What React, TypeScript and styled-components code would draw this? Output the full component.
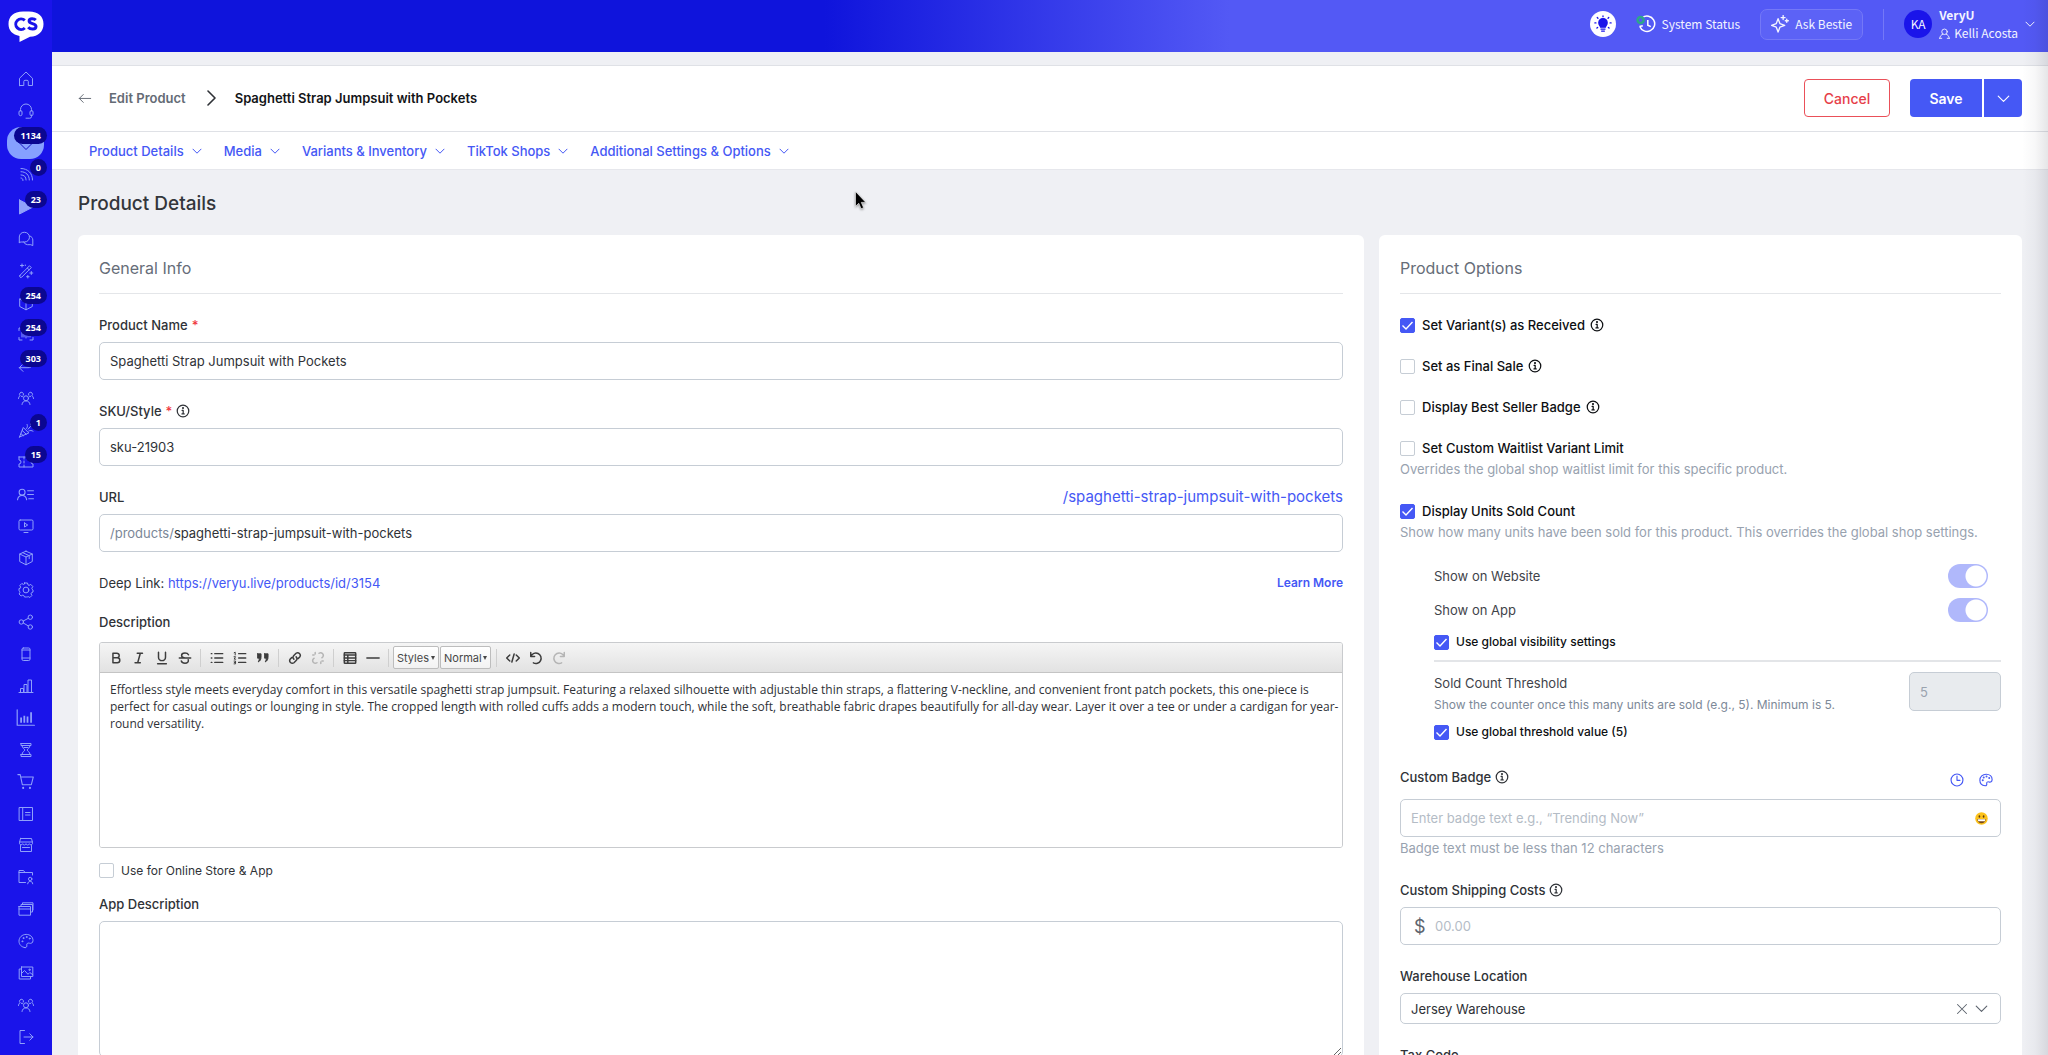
import React, { useId } from "react";
import styled, { createGlobalStyle, css } from "styled-components";

const ink = "#2f3237";
const accent = "#4558f5";
const line = "#c6cdd5";
const muted = "#98a2af";

const GlobalStyle = createGlobalStyle`
  * { box-sizing: border-box; }
  body { margin: 0; background: #eff0f4; }
  body, button, input, select, textarea { font-family: Inter, "Liberation Sans", sans-serif; }
  button { border: 0; padding: 0; background: none; cursor: pointer; }
  a { text-decoration: none; }
  svg { display: block; flex: none; }
`;

/* ---------- icons ---------- */

const Glyph = styled.svg.attrs<{ $w?: number }>({ fill: "none", stroke: "currentColor", strokeLinecap: "round", strokeLinejoin: "round" })<{ $w?: number }>`
  stroke-width: ${(p) => p.$w ?? 1};
`;

function Icon({ size = 16, w = 1, children }: { size?: number; w?: number; children: React.ReactNode }) {
  return (
    <Glyph viewBox="0 0 16 16" width={size} height={size} $w={w} aria-hidden="true">
      {children}
    </Glyph>
  );
}

const ChevronDown = ({ size = 10, w = 2 }: { size?: number; w?: number }) => (
  <Icon size={size} w={w}><path d="M1.5 5 8 11.5 14.5 5" /></Icon>
);

const Info = () => (
  <Icon size={14} w={1.4}>
    <circle cx="8" cy="8" r="6.6" />
    <path d="M6.9 7.2H8.2V11.3M6.8 11.4H9.4" />
    <circle cx="8" cy="4.7" r=".5" fill="currentColor" />
  </Icon>
);

const Clock = ({ size = 14 }: { size?: number }) => (
  <Icon size={size} w={1.3}><circle cx="8" cy="8" r="6.8" /><path d="M8 3.6V8.4H11.4" /></Icon>
);

const paletteShape = (
  <>
    <path d="M7 14.6C3.4 14.2 1 11.500 1 8.200 1 4.300 4.200 1.400 8.200 1.400s6.800 2.600 6.800 6c0 2.600-1.900 3.400-3.600 2.800-1.600-.5-3 .4-2.600 1.900.4 1.400-.3 2.600-1.800 2.500Z" />
    <circle cx="4.300" cy="8.300" r=".5" /><circle cx="5.400" cy="5.100" r=".5" /><circle cx="8.600" cy="4" r=".5" /><circle cx="11.700" cy="5.600" r=".5" />
  </>
);

const people = (
  <>
    <circle cx="8" cy="8.300" r="2.500" />
    <path d="M4 14.500c.2-2.200 1.800-3.600 4-3.600s3.800 1.400 4 3.600" />
    <path d="M5.300 5.200A2 2 0 1 0 2.200 5.800C1.100 6.300.6 7.300.5 8.500M3.400 6.300c.6 0 1 .1 1.500.5" />
    <path d="M10.700 5.200A2 2 0 1 1 13.800 5.800c1.100.5 1.600 1.500 1.700 2.700M12.600 6.300c-.6 0-1 .1-1.500.5" />
  </>
);

const cube = <path d="M8 1.200 14.300 4v7.500L8 14.800 1.700 11.500V4L8 1.200ZM1.700 4 8 7l6.300-3M8 7v7.800" />;

interface NavEntry { name: string; art: React.ReactNode; badge?: string; active?: boolean; size?: number }

const sideNav: NavEntry[] = [
  { name: "Home", art: <path d="M1.500 14.500V7.300L8 1l6.500 6.300v7.200h-4.200v-4a1.200 1.200 0 0 0-1.200-1.200H7a1.200 1.200 0 0 0-1.200 1.200v4H1.500Z" /> },
  { name: "Support", art: <><path d="M2.500 8V6.500a5.500 5.500 0 0 1 11 0V8M13.500 12v1.500a1.700 1.700 0 0 1-1.700 1.700H8" /><rect x="1" y="7.500" width="3" height="5.200" rx="1.500" /><rect x="12" y="7.500" width="3" height="5.200" rx="1.500" /></> },
  { name: "Products", badge: "1134", active: true, art: <path d="M1 7.500 4 4h8l3 3.500-7 7L1 7.500Z" /> },
  { name: "Live", badge: "0", art: <><path d="M3 1.500C9.800 1.500 14.500 6.200 14.500 13M3 4.700c5 0 8.300 3.300 8.300 8.300M3 7.900c3.200 0 5.100 1.900 5.100 5.100M3 11a2 2 0 0 1 2 2.500" /></> },
  { name: "Replays", badge: "23", art: <path d="M1.500 1v14L15 8 1.500 1Z" fill="currentColor" /> },
  { name: "Messages", art: <><path d="M1.300 11.300V6A4.700 4.700 0 0 1 6 1.300h.7A4.800 4.800 0 0 1 6.500 11H3.200l-1.900.3Z" /><path d="M11.800 5c1.900.5 3 2 3 4v5.600l-2-.9H9.500A4 4 0 0 1 5.800 11" /></> },
  { name: "Magic", art: <><path d="m2 12.300 9.500-9.500 1.800 1.800-9.500 9.500a1.270 1.270 0 0 1-1.800-1.800ZM9.300 5l1.800 1.800" /><path d="M4 1v3M2.500 2.500h3M13.300 8.500v3M11.800 10h3M9.800 12.500v2.500M8.600 13.700h2.500M7.300 2v.6" /></> },
  { name: "Orders", badge: "254", art: cube },
  { name: "Scan", badge: "254", art: <path d="M1 4.500V2h3M12 2h3v2.500M15 11.500V14h-3M4 14H1v-2.500M4 6v5M6 6v5M8 5v7M10 6v5M12 6v5" /> },
  { name: "Returns", badge: "303", art: <path d="M5 6 1.300 9.700 5 13.400M1.300 9.700H10A4 4 0 0 0 14.500 6V3" /> },
  { name: "Customers", art: people },
  { name: "Promotions", badge: "1", art: <><path d="M1.500 15 5.300 5.500l5.500 5.500L1.500 15ZM4.200 8.500l4 3.700M2.900 11.600l2.500 2.100" /><path d="M8.500 6.500c1-1 1.200-2.500.6-4M10 7.300l3-3.500M10.700 9c1.500-.8 3-.6 4.300.2M12.500 1.500v1M14.500 5.500h.6" /></> },
  { name: "Coupons", badge: "15", art: <path d="M1 3h14v3a2 2 0 0 0 0 4v3H1v-3a2 2 0 0 0 0-4V3ZM6 3v2M6 7v2M6 11v2" /> },
  { name: "Accounts", size: 17, art: <><circle cx="4.800" cy="5.800" r="2.800" /><path d="M.5 13c.3-2.500 1.900-4 4.300-4s4 1.500 4.300 4M10 4.500h5.500M10 8h5.500M11 12h4.500" /></> },
  { name: "Videos", art: <><rect x="1" y="2" width="14" height="10" rx="1.200" /><path d="M6.500 5v4L9.700 7 6.500 5ZM6 14.500h4" /></> },
  { name: "Inventory", art: <>{cube}<path d="m4.800 2.700 6.400 3v3" /></> },
  { name: "Settings", art: <><circle cx="8" cy="8" r="2.900" /><path d="M6.500 1h3l.5 1.900 1 .5 1.800-1 2 2.100-1 1.800.4 1 .8.700v2l-1.600.800-.4 1 .9 1.700-2 2-1.700-.9-1 .4L8.500 15h-2l-.7-1.500-1-.4-1.700.9-2-2 .9-1.700-.4-1L1 8.800V6.500l1.300-.3.4-1-.9-1.700 2-2 1.700.9 1-.4V1Z" /></> },
  { name: "Share", art: <><circle cx="3.300" cy="8" r="2.200" /><circle cx="12.300" cy="3.200" r="2.200" /><circle cx="12.300" cy="13" r="2.200" /><path d="m5.300 7 5-2.700M5.300 9l5 2.900" /></> },
  { name: "Mobile App", art: <><rect x="4" y="2" width="8" height="12.500" rx="1.300" /><path d="M4 4h8M4 12h8" /></> },
  { name: "Reports", art: <path d="M1 14.500h14M2.500 14.500v-4h3v4M6 14.500V6.500h3v8M10 14.500V2h3.500v12.500" /> },
  { name: "Analytics", size: 19, art: <><path d="M1 1.500v13h14.500" /><path d="M4.300 12.500V8M7 12.500v-6M9.700 12.500V7.200M12.700 12.500V3.500" strokeWidth="1.500" strokeLinecap="butt" /></> },
  { name: "Waitlist", art: <path d="M3 1.500h10v2H3v-2ZM3 12.500h10v2H3v-2ZM4 3.500c0 3 2.800 3.200 2.800 4.500S4 9.500 4 12.500M12 3.500c0 3-2.800 3.200-2.800 4.500s2.800 1.500 2.800 4.500M6 5.500h4" /> },
  { name: "Carts", size: 17, art: <><path d="M.8 1.500H3L5 11h8.500l1.800-7.200H3.600" /><circle cx="5.800" cy="14" r=".5" /><circle cx="12.200" cy="14" r=".5" /></> },
  { name: "Catalog", art: <><rect x="1.500" y="1.500" width="13" height="13" /><path d="M4.700 1.500v13M7.500 6.500H12M7.500 9H12" /></> },
  { name: "Storefront", art: <path d="M2.500 1.500h11l1 4v1.200a1.700 1.700 0 0 1-3.200 0 1.700 1.700 0 0 1-3.300 0 1.700 1.700 0 0 1-3.300 0 1.700 1.700 0 0 1-3.200 0V5.500l1-4ZM1.500 5h13M2.500 8.500v6h11v-6M4.500 10.500h7" /> },
  { name: "Team Files", art: <><path d="M7.500 13.500H1v-12h4.500l1.500 2h7.500V6M1 3.500h6" /><circle cx="12.200" cy="10" r="1.700" /><path d="M9.700 14.800c.2-1.500 1-2.500 2.500-2.500s2.300 1 2.500 2.500" /></> },
  { name: "Pages", art: <path d="M1 5.500h11.500v8.700H1V5.500ZM1 8h11.500M3 5.500v-2h11.500V11h-2M4.500 3.500V1.800H15V9" /> },
  { name: "Theme", art: paletteShape },
  { name: "Media Library", art: <><path d="M3.500 2h11.300v9.500H3.500V2ZM3.500 4H1.200v10h11.300v-2.500M3.500 8.500l3-3 3.500 3.800 1.800-1.800 3 2.300" /><circle cx="11.500" cy="4.800" r=".7" /></> },
  { name: "Community", art: people },
  { name: "Log Out", art: <path d="M6.500 1.500H2v13h4.500M6 8h9M11.800 4.800 15 8l-3.200 3.200" /> },
];

/* ---------- shell ---------- */

const Shell = styled.div`
  display: grid;
  grid-template-columns: 52px minmax(0, 1fr);
  height: 100vh;
`;

const Sidebar = styled.aside`
  display: flex;
  flex-direction: column;
  align-items: center;
  padding: 10px 0 2px;
  background: #1a14ea;
  color: #8fa0fb;
  min-height: 0;
`;

const Logo = styled.a`
  height: 53px;
`;

const SideList = styled.nav`
  flex: 1;
  display: flex;
  flex-direction: column;
  width: 100%;
  padding: 0 7px;
`;

const SideLink = styled.a<{ $active?: boolean }>`
  flex: 1;
  position: relative;
  display: flex;
  align-items: center;
  justify-content: center;
  width: 37px;
  color: ${(p) => (p.$active ? "#1411c4" : "inherit")};
  border-radius: 14px;
  background: ${(p) => (p.$active ? "#86a0ff" : "none")};
  background-clip: content-box;
  min-height: 0;
`;

const Badge = styled.span`
  position: absolute;
  top: 0;
  right: -3px;
  min-width: 16px;
  padding: 0 6px;
  border-radius: 9px;
  background: #0b0791;
  color: #fff;
  font: 700 9px/17px "Noto Sans", sans-serif;
  text-align: center;
`;

const Main = styled.div`
  position: relative;
  display: flex;
  flex-direction: column;
  min-height: 0;
  &::after {
    content: "";
    position: absolute;
    inset: 0 0 0 auto;
    width: 26px;
    background: linear-gradient(to right, rgba(20, 20, 40, 0), rgba(20, 20, 40, 0.03) 50%, rgba(20, 20, 40, 0.11));
    pointer-events: none;
  }
`;

const TopBar = styled.header`
  flex: none;
  display: flex;
  align-items: center;
  justify-content: flex-end;
  gap: 20px;
  height: 52px;
  padding: 0 11px 4px 0;
  background: linear-gradient(to right, #0f14dc 38.7%, #5359f5 59%);
  color: #f3f4ff;
  font: 400 12px/18px "Noto Sans CJK SC", "Noto Sans", sans-serif;
`;

const BulbButton = styled.button`
  display: grid;
  place-items: center;
  width: 26px;
  height: 26px;
  border-radius: 50%;
  background: #fff;
  color: #1a14ea;
`;

const StatusLink = styled.a`
  display: flex;
  align-items: center;
  gap: 6px;
  color: inherit;
`;

const BestieButton = styled.button`
  display: flex;
  align-items: center;
  gap: 6px;
  height: 31px;
  padding: 0 10px;
  border: 1px solid #7478f7;
  border-radius: 7px;
  background: #5c62f6;
  color: inherit;
  font: inherit;
`;

const BarRule = styled.span`
  width: 1px;
  height: 31px;
  background: #7478f7;
`;

const Account = styled.button`
  display: grid;
  grid-template-columns: 28px auto 12px;
  align-items: center;
  gap: 7px;
  color: inherit;
  font: inherit;
  text-align: left;
`;

const Avatar = styled.span`
  display: grid;
  place-items: center;
  width: 28px;
  height: 28px;
  border-radius: 50%;
  background: #1a14ea;
`;

const AccountText = styled.span`
  display: flex;
  flex-direction: column;
`;

const AccountUser = styled.span`
  display: flex;
  align-items: center;
  gap: 4px;
`;

/* ---------- page heading ---------- */

const PageHead = styled.div`
  flex: none;
  display: flex;
  align-items: center;
  height: 67px;
  margin-top: 13px;
  padding: 0 26px 1px;
  border: solid #dfe1e6;
  border-width: 1px 0;
  background: #fff;
`;

const Crumbs = styled.nav`
  flex: 1;
  display: flex;
  align-items: center;
  color: ${ink};
  font-size: 13px;
  font-weight: 600;
`;

const BackLink = styled.a`
  display: flex;
  align-items: center;
  gap: 17px;
  margin-right: 17px;
  color: #646b75;
`;

const CrumbTitle = styled.span`
  margin-left: 16px;
  color: #121417;
`;

const CancelButton = styled.button`
  width: 86px;
  height: 38px;
  margin-right: 20px;
  border: 1px solid #ea5059;
  border-radius: 4px;
  color: #e63e49;
  font-size: 14px;
  font-weight: 500;
`;

const SaveButton = styled.button<{ $menu?: boolean }>`
  display: grid;
  place-items: center;
  width: ${(p) => (p.$menu ? 38 : 72)}px;
  height: 38px;
  margin-left: ${(p) => (p.$menu ? 2 : 0)}px;
  border-radius: ${(p) => (p.$menu ? "0 4px 4px 0" : "4px 0 0 4px")};
  background: ${accent};
  color: #fff;
  font-size: 14px;
  font-weight: 600;
`;

const Tabs = styled.nav`
  flex: none;
  display: flex;
  align-items: center;
  gap: 22px;
  height: 38px;
  padding: 0 37px;
  border-bottom: 1px solid #e6e7ec;
  background: #fff;
`;

const Tab = styled.button`
  display: flex;
  align-items: center;
  gap: 8px;
  color: ${accent};
  font-size: 13px;
  font-weight: 500;
`;

const Content = styled.main`
  flex: 1;
  min-height: 0;
  padding: 0 26px;
  overflow: hidden auto;
  scrollbar-width: none;
`;

const SectionTitle = styled.h1`
  margin: 21px 0 18px;
  color: #33363b;
  font-size: 19px;
  font-weight: 500;
  line-height: 26px;
`;

const Columns = styled.div`
  display: grid;
  grid-template-columns: minmax(0, 2fr) minmax(0, 1fr);
  align-items: start;
  gap: 15px;
`;

const Card = styled.section`
  padding: 0 21px 32px;
  border-radius: 6px;
  background: #fff;
`;

const CardTitle = styled.h2`
  margin: 0 0 21px;
  padding: 21px 0 13px;
  border-bottom: 1px solid #e4e6e9;
  color: #666d78;
  font-size: 16px;
  font-weight: 400;
  line-height: 24px;
`;

/* ---------- form parts ---------- */

const Field = styled.div`
  margin-bottom: 21px;
`;

const FieldHead = styled.div<{ $gap?: number }>`
  display: flex;
  align-items: center;
  justify-content: space-between;
  margin-bottom: ${(p) => p.$gap ?? 7}px;
`;

const Label = styled.label`
  display: flex;
  align-items: center;
  gap: 4px;
  color: ${ink};
  font-size: 13px;
  font-weight: 500;
  line-height: 20px;
`;

const Required = styled.span`
  color: #f0383e;
`;

const boxed = css`
  border: 1px solid ${line};
  border-radius: 5px;
  background: #fff;
  color: ${ink};
  font-size: 13px;
`;

const TextInput = styled.input`
  ${boxed}
  display: block;
  width: 100%;
  height: 38px;
  padding: 0 10px;
`;

const InputBox = styled.div<{ $h?: number }>`
  ${boxed}
  display: flex;
  align-items: center;
  height: ${(p) => p.$h ?? 38}px;
  padding: 0 12px 0 10px;
`;

const bare = css`
  flex: 1;
  min-width: 0;
  padding: 0;
  border: 0;
  outline: 0;
  background: none;
  color: ${ink};
  font-size: 13px;
  &::placeholder { color: #b4bcc6; opacity: 1; }
`;

const BareInput = styled.input`${bare}`;
const BareSelect = styled.select`
  ${bare}
  appearance: none;
`;

const Prefix = styled.span`
  color: #7b8797;
  font-size: 13px;
`;

const Dollar = styled.span`
  width: 24px;
  padding-left: 3px;
  color: #5d646e;
  font-size: 18px;
`;

const SelectMarks = styled.span`
  display: flex;
  align-items: center;
  gap: 7px;
  color: #5d646e;
`;

const BlueLink = styled.a<{ $size?: number; $strong?: boolean }>`
  color: ${accent};
  font-size: ${(p) => p.$size ?? 13}px;
  font-weight: ${(p) => (p.$strong ? 600 : 400)};
  line-height: 20px;
`;

const DeepLink = styled.div`
  display: flex;
  justify-content: space-between;
  margin: 0 0 19px;
  color: ${ink};
  font-size: 13px;
  line-height: 20px;
`;

const Editor = styled.div`
  border: 1px solid #c9cbce;
  border-radius: 3px;
  overflow: hidden;
`;

const Toolbar = styled.div`
  display: flex;
  align-items: center;
  height: 30px;
  padding: 0 4px;
  border-bottom: 1px solid #c4c4c4;
  background: linear-gradient(#f5f5f5, #e2e2e2);
`;

const ToolButton = styled.button`
  display: grid;
  place-items: center;
  width: 23px;
  height: 24px;
  color: #3d3d3d;
  &:disabled { color: #b5b5b5; }
`;

const ToolRule = styled.span`
  width: 1px;
  height: 18px;
  margin: 0 4px;
  background: #cfcfcf;
`;

const ToolSelect = styled.span<{ $w: number }>`
  display: flex;
  align-items: center;
  width: ${(p) => p.$w}px;
  height: 23px;
  margin-right: 1px;
  padding: 0 3px;
  border: 1px solid #bdbdbd;
  border-radius: 2px;
  background: linear-gradient(#fff, #f2f2f2);
  color: #474747;
  select {
    ${bare}
    appearance: none;
    color: inherit;
    font-size: 11px;
  }
`;

const EditorText = styled.textarea`
  display: block;
  width: 100%;
  height: 174px;
  padding: 8px 0 8px 10px;
  border: 0;
  outline: 0;
  resize: none;
  color: ${ink};
  font-family: "Open Sans", sans-serif;
  font-size: 12px;
  line-height: 17px;
`;

const PlainArea = styled.textarea`
  ${boxed}
  display: block;
  width: 100%;
  height: 136px;
  padding: 10px;
  resize: vertical;
`;

const CheckRow = styled.div<{ $gap?: number; $small?: boolean }>`
  display: flex;
  align-items: center;
  gap: 7px;
  margin-bottom: ${(p) => p.$gap ?? 21}px;
  color: #0d0f12;
  font-size: ${(p) => (p.$small ? 12 : 13)}px;
  font-weight: 500;
  line-height: 20px;
  svg { margin-left: -2px; }
`;

const Tick = styled.input.attrs({ type: "checkbox" })`
  appearance: none;
  flex: none;
  width: 15px;
  height: 15px;
  margin: 0;
  border: 1px solid ${line};
  border-radius: 2px;
  background: #fff;
  &:checked {
    border-color: ${accent};
    background: ${accent} url("data:image/svg+xml,%3Csvg xmlns='http://www.w3.org/2000/svg' viewBox='0 0 13 13' fill='none' stroke='white' stroke-width='1.400'%3E%3Cpath d='M1.500 6.500 5 10 11.500 3'/%3E%3C/svg%3E");
  }
`;

const StoreCheck = styled.div`
  display: flex;
  align-items: center;
  gap: 7px;
  margin: 15px 0 16px;
  color: ${ink};
  font-size: 12px;
  line-height: 15px;
`;

const Hint = styled.p<{ $size?: number; $gap?: number; $dark?: boolean }>`
  margin: 1px 0 ${(p) => p.$gap ?? 22}px;
  color: ${(p) => (p.$dark ? "#7d8998" : muted)};
  font-size: ${(p) => p.$size ?? 13}px;
  line-height: 20px;
`;

const Nested = styled.div`
  padding-left: 34px;
`;

const SwitchRow = styled.div`
  display: flex;
  align-items: center;
  justify-content: space-between;
  height: 24px;
  margin-bottom: 10px;
  padding-right: 13px;
  color: #3f434a;
  font-size: 13px;
`;

const Switch = styled.input.attrs({ type: "checkbox", role: "switch" })`
  appearance: none;
  width: 40px;
  height: 24px;
  margin: 0;
  border-radius: 12px;
  background: radial-gradient(circle at 28px 12px, #fff 10px, #b0b8fb 11px);
`;

const Divider = styled.hr`
  height: 2px;
  margin: 8px 0 10px;
  border: 0;
  background: #e3e5e8;
`;

const Threshold = styled.div`
  display: flex;
  align-items: flex-start;
  justify-content: space-between;
  height: 50px;
  label {
    color: #3f434a;
    font-size: 13px;
    line-height: 22px;
  }
`;

const ThresholdInput = styled.input`
  ${boxed}
  width: 92px;
  height: 39px;
  padding: 0 10px;
  background: #e8ebee;
  color: #9aa3ae;
`;

const IconActions = styled.div`
  display: flex;
  gap: 15px;
  padding: 5px 8px 0 0;
  color: ${accent};
`;

const IconButton = styled.button`
  color: inherit;
`;

const Pointer = styled.svg`
  position: fixed;
  left: 855px;
  top: 191px;
  filter: drop-shadow(0 1px 1px rgba(0, 0, 0, 0.4));
  pointer-events: none;
`;

/* ---------- pieces ---------- */

function Check({ label, info, on, gap, small }: { label: string; info?: boolean; on?: boolean; gap?: number; small?: boolean }) {
  const id = useId();
  return (
    <CheckRow $gap={gap} $small={small}>
      <Tick id={id} defaultChecked={on} />
      <label htmlFor={id}>{label}</label>
      {info && <Info />}
    </CheckRow>
  );
}

function Toggle({ label }: { label: string }) {
  const id = useId();
  return (
    <SwitchRow>
      <label htmlFor={id}>{label}</label>
      <Switch id={id} defaultChecked />
    </SwitchRow>
  );
}

const Tool = ({ name, off, children }: { name: string; off?: boolean; children: React.ReactNode }) => (
  <ToolButton type="button" aria-label={name} disabled={off}>
    <Icon size={14} w={1.7}>{children}</Icon>
  </ToolButton>
);

function EditorToolbar() {
  return (
    <Toolbar role="toolbar" aria-label="Formatting">
      <Tool name="Bold"><path d="M4.500 2.500H9a2.600 2.600 0 0 1 0 5.300H4.500V2.500ZM4.500 7.800h5a2.800 2.800 0 0 1 0 5.700h-5V7.800Z" /></Tool>
      <Tool name="Italic"><path d="M6 2.500h6M3.500 13.500h6M9.500 2.500l-3 11" /></Tool>
      <Tool name="Underline"><path d="M4 1.500V7a4 4 0 0 0 8 0V1.500M3 14.500h10" /></Tool>
      <Tool name="Strikethrough"><path d="M12 4.300C11.300 2.900 9.900 2.200 8 2.200c-2.300 0-3.900 1.100-3.900 2.800 0 1.500 1.300 2.300 3 2.800M1.500 8h13M11.700 10c.8 2.300-1 3.900-3.700 3.900-2.200 0-3.700-.9-4.200-2.500" /></Tool>
      <ToolRule />
      <Tool name="Bulleted list"><path d="M5.500 3h9M5.500 8h9M5.500 13h9M1.500 3h.6M1.500 8h.6M1.500 13h.6" /></Tool>
      <Tool name="Numbered list"><path d="M6.500 3h8M6.500 8h8M6.500 13h8" /><path d="M1.300 2 2.500 1.300V4.500M1.200 6.500h1.700L1.300 9.300h1.800M1.200 11.500h1.700v3.200H1.200M1.500 13.100h1.300" strokeWidth="1.100" /></Tool>
      <Tool name="Quote"><path d="M1.800 3.200h4v4C5.800 9.800 4.500 11.600 2.500 12.500c1-1.500 1.300-2.900 1.200-4.300H1.800v-5ZM9.800 3.200h4v4c0 2.600-1.300 4.400-3.300 5.300 1-1.500 1.300-2.900 1.200-4.300H9.800v-5Z" fill="currentColor" strokeWidth="1" /></Tool>
      <ToolRule />
      <Tool name="Link"><path d="M6.700 9.300a3 3 0 0 1 0-4.200l2.500-2.500a3 3 0 0 1 4.200 4.200L11.800 8.400M9.300 6.700a3 3 0 0 1 0 4.200l-2.500 2.500a3 3 0 0 1-4.200-4.200L4.200 7.600" /></Tool>
      <Tool name="Unlink" off><path d="M9.200 2.600a3 3 0 0 1 4.200 4.200L12.500 7.700M6.800 13.400a3 3 0 0 1-4.200-4.200l.9-.9M2 4.500h1.500M4.800 1.800v1.500M11.200 12.700v1.500M12.500 11.500H14" /></Tool>
      <ToolRule />
      <Tool name="Table"><rect x="1.500" y="2" width="13" height="12" rx=".6" /><path d="M1.500 4.500h13M1.500 8h13M1.500 11h13M5.500 5v9" /></Tool>
      <Tool name="Horizontal line"><path d="M1 8h14" /></Tool>
      <ToolRule />
      <ToolSelect $w={46}>
        <select aria-label="Styles"><option>Styles</option></select>
        <svg width="4" height="4" viewBox="0 0 4 4" fill="currentColor" aria-hidden="true"><path d="M0 0h4L2 4Z" /></svg>
      </ToolSelect>
      <ToolSelect $w={51}>
        <select aria-label="Paragraph format"><option>Normal</option></select>
        <svg width="4" height="4" viewBox="0 0 4 4" fill="currentColor" aria-hidden="true"><path d="M0 0h4L2 4Z" /></svg>
      </ToolSelect>
      <ToolRule />
      <Tool name="Source"><path d="M4.300 4.500.8 8l3.500 3.500M11.700 4.500 15.200 8l-3.500 3.500M9.300 3.500l-2.600 9" /></Tool>
      <Tool name="Undo"><path d="M2 1.800v4.400h4.400M2.300 6A6 6 0 1 1 5 13.600" /></Tool>
      <Tool name="Redo" off><path d="M14 1.800v4.400H9.600M13.700 6A6 6 0 1 0 11 13.600" /></Tool>
    </Toolbar>
  );
}

const description =
  "Effortless style meets everyday comfort in this versatile spaghetti strap jumpsuit. Featuring a relaxed silhouette with adjustable thin straps, a flattering V-neckline, and convenient front patch pockets, this one-piece is perfect for casual outings or lounging in style. The cropped length with rolled cuffs adds a modern touch, while the soft, breathable fabric drapes beautifully for all-day wear. Layer it over a tee or under a cardigan for year-round versatility.";

function GeneralInfo() {
  return (
    <Card>
      <CardTitle>General Info</CardTitle>
      <Field>
        <FieldHead><Label htmlFor="name">Product Name <Required>*</Required></Label></FieldHead>
        <TextInput id="name" defaultValue="Spaghetti Strap Jumpsuit with Pockets" />
      </Field>
      <Field>
        <FieldHead><Label htmlFor="sku">SKU/Style <Required>*</Required> <Info /></Label></FieldHead>
        <TextInput id="sku" defaultValue="sku-21903" />
      </Field>
      <Field>
        <FieldHead>
          <Label htmlFor="url">URL</Label>
          <BlueLink href="#" $size={15}>/spaghetti-strap-jumpsuit-with-pockets</BlueLink>
        </FieldHead>
        <InputBox>
          <Prefix>/products/</Prefix>
          <BareInput id="url" defaultValue="spaghetti-strap-jumpsuit-with-pockets" />
        </InputBox>
      </Field>
      <DeepLink>
        <span>Deep Link: <BlueLink href="#">https://veryu.live/products/id/3154</BlueLink></span>
        <BlueLink href="#" $size={12} $strong>Learn More</BlueLink>
      </DeepLink>
      <FieldHead $gap={10}><Label htmlFor="description">Description</Label></FieldHead>
      <Editor>
        <EditorToolbar />
        <EditorText id="description" defaultValue={description} />
      </Editor>
      <StoreCheck>
        <Tick id="online" />
        <label htmlFor="online">Use for Online Store &amp; App</label>
      </StoreCheck>
      <FieldHead><Label htmlFor="app-description">App Description</Label></FieldHead>
      <PlainArea id="app-description" />
    </Card>
  );
}

function ProductOptions() {
  return (
    <Card>
      <CardTitle>Product Options</CardTitle>
      <Check label="Set Variant(s) as Received" info on />
      <Check label="Set as Final Sale" info />
      <Check label="Display Best Seller Badge" info />
      <Check label="Set Custom Waitlist Variant Limit" gap={0} />
      <Hint>Overrides the global shop waitlist limit for this specific product.</Hint>
      <Check label="Display Units Sold Count" on gap={0} />
      <Hint>Show how many units have been sold for this product. This overrides the global shop settings.</Hint>
      <Nested>
        <Toggle label="Show on Website" />
        <Toggle label="Show on App" />
        <Check label="Use global visibility settings" on gap={0} small />
        <Divider />
        <Threshold>
          <div>
            <label htmlFor="threshold">Sold Count Threshold</label>
            <Hint $size={12} $gap={0} $dark>Show the counter once this many units are sold (e.g., 5). Minimum is 5.</Hint>
          </div>
          <ThresholdInput id="threshold" defaultValue="5" disabled />
        </Threshold>
        <Check label="Use global threshold value (5)" on gap={25} small />
      </Nested>
      <FieldHead $gap={12}>
        <Label htmlFor="badge">Custom Badge <Info /></Label>
        <IconActions>
          <IconButton type="button" aria-label="Schedule badge"><Clock /></IconButton>
          <IconButton type="button" aria-label="Badge colours"><Icon size={14} w={1.3}>{paletteShape}</Icon></IconButton>
        </IconActions>
      </FieldHead>
      <InputBox>
        <BareInput id="badge" placeholder="Enter badge text e.g., “Trending Now”" />
        <IconButton type="button" aria-label="Pick emoji">
          <svg width="13" height="13" viewBox="0 0 16 16" aria-hidden="true">
            <circle cx="8" cy="8" r="7.700" fill="#fcc21b" />
            <path d="M2.800 8.600h10.400c0 3.300-2.200 5.200-5.200 5.200s-5.200-1.900-5.200-5.200Z" fill="#7a4a16" />
            <path d="M3.300 8.800h9.400l-.6 2.600H3.900Z" fill="#fff" />
            <ellipse cx="5.400" cy="5.500" rx="1" ry="1.500" fill="#5d3a12" /><ellipse cx="10.600" cy="5.500" rx="1" ry="1.500" fill="#5d3a12" />
          </svg>
        </IconButton>
      </InputBox>
      <Hint>Badge text must be less than 12 characters</Hint>
      <Field>
        <FieldHead><Label htmlFor="shipping">Custom Shipping Costs <Info /></Label></FieldHead>
        <InputBox>
          <Dollar>$</Dollar>
          <BareInput id="shipping" placeholder="00.00" />
        </InputBox>
      </Field>
      <Field>
        <FieldHead><Label htmlFor="warehouse">Warehouse Location</Label></FieldHead>
        <InputBox $h={31}>
          <BareSelect id="warehouse"><option>Jersey Warehouse</option></BareSelect>
          <SelectMarks>
            <IconButton type="button" aria-label="Clear warehouse"><Icon size={12} w={1.400}><path d="m2 2 12 12M14 2 2 14" /></Icon></IconButton>
            <ChevronDown size={13} w={1.400} />
          </SelectMarks>
        </InputBox>
      </Field>
      <FieldHead><Label htmlFor="tax">Tax Code</Label></FieldHead>
      <InputBox $h={31}>
        <BareSelect id="tax"><option value="" /></BareSelect>
        <SelectMarks><ChevronDown size={13} w={1.400} /></SelectMarks>
      </InputBox>
    </Card>
  );
}

export default function App() {
  return (
    <Shell>
      <GlobalStyle />
      <Sidebar>
        <Logo href="#" aria-label="Home">
          <svg width="36" height="33" viewBox="0 0 36 33" fill="#fff">
            <path d="M15 1.500h6c9.500 0 14.500 5 14.500 12.500S30.500 26.500 22 26.800L11.500 32V26C4.500 24.500.5 20.500.5 14 .5 6.500 5.500 1.500 15 1.500Z" />
            <g fill="none" stroke="#1a14ea" strokeWidth="3">
              <path d="M16.800 10.400A5.300 5.300 0 1 0 16.800 18" />
              <path d="M27.800 10c-1.200-1.200-6.600-2.200-6.700 1 0 3.300 7 1.900 6.900 5.500-.1 3.400-5.600 3.300-7.800.7" />
            </g>
          </svg>
        </Logo>
        <SideList aria-label="Main">
          {sideNav.map((item) => (
            <SideLink key={item.name} href="#" aria-label={item.name} $active={item.active}>
              <Icon size={item.size ?? 16}>{item.art}</Icon>
              {item.badge && <Badge>{item.badge}</Badge>}
            </SideLink>
          ))}
        </SideList>
      </Sidebar>

      <Main>
        <TopBar>
          <BulbButton aria-label="Tips">
            <Icon size={18} w={1.2}>
              <path d="M5.900 10.800C5.700 9.600 4.300 9 4.300 6.900a3.700 3.700 0 0 1 7.400 0c0 2.100-1.400 2.700-1.600 3.900H5.900ZM6.200 12.500h3.600M6.800 14.300h2.400" fill="currentColor" />
              <path d="M8 .8V1.500M2.900 2.300l.6.6M13.100 2.300l-.6.6M.8 7h.9M14.300 7h.9M2.600 11.600l.6-.5M13.400 11.600l-.6-.5" />
            </Icon>
          </BulbButton>
          <StatusLink href="#">
            <svg width="20" height="20" viewBox="0 0 20 20" fill="none" strokeWidth="1.500" aria-hidden="true">
              <path d="M6.500 3.500A7.700 7.700 0 1 1 3.800 12.500M11.800 6v5.200l3 1.500M3.500 12.500l3.300-.8" stroke="#fff" />
              <circle cx="4.600" cy="6" r="3" stroke="#2da58c" strokeWidth="2.600" />
            </svg>
            System Status
          </StatusLink>
          <BestieButton>
            <Icon size={18} w={1.2}>
              <path d="M6.300 3.300 7.900 7.600 12.200 9.200 7.900 10.800 6.300 15.200 4.700 10.800.5 9.200 4.700 7.600Z" />
              <path d="M10.800.5V4M9 2.300h3.500M14 3.800v2.600M12.700 5.100h2.700" />
            </Icon>
            Ask Bestie
          </BestieButton>
          <BarRule />
          <Account>
            <Avatar>KA</Avatar>
            <AccountText>
              <strong>VeryU</strong>
              <AccountUser>
                <Icon size={11} w={1.3}><circle cx="8" cy="5.500" r="4" /><path d="M1 15c.4-3.300 2.500-5.500 4.500-6M15 15c-.4-3.300-2.500-5.500-4.500-6M1 15h3M12 15h3" /></Icon>
                Kelli Acosta
              </AccountUser>
            </AccountText>
            <ChevronDown w={1.600} />
          </Account>
        </TopBar>

        <PageHead>
          <Crumbs>
            <BackLink href="#">
              <Icon size={14} w={1.100}><path d="M14.500 8.500H1.500M6 4 1.500 8.500 6 13" /></Icon>
              Edit Product
            </BackLink>
            <Icon size={16} w={1.600}><path d="M5 1l7 7-7 7" /></Icon>
            <CrumbTitle>Spaghetti Strap Jumpsuit with Pockets</CrumbTitle>
          </Crumbs>
          <CancelButton>Cancel</CancelButton>
          <SaveButton>Save</SaveButton>
          <SaveButton $menu aria-label="More save options"><ChevronDown size={13} w={1.400} /></SaveButton>
        </PageHead>

        <Tabs>
          {["Product Details", "Media", "Variants & Inventory", "TikTok Shops", "Additional Settings & Options"].map((t) => (
            <Tab key={t}>{t}<ChevronDown w={1.600} /></Tab>
          ))}
        </Tabs>

        <Content>
          <SectionTitle>Product Details</SectionTitle>
          <Columns>
            <GeneralInfo />
            <ProductOptions />
          </Columns>
        </Content>
      </Main>
      <Pointer width="12" height="19" viewBox="0 0 12 19" aria-hidden="true">
        <path d="M.5.5v14.800l3.300-3 2.300 5.400 2.500-1-2.300-5.300h4.500Z" fill="#000" stroke="#fff" strokeWidth=".6" />
      </Pointer>
    </Shell>
  );
}
